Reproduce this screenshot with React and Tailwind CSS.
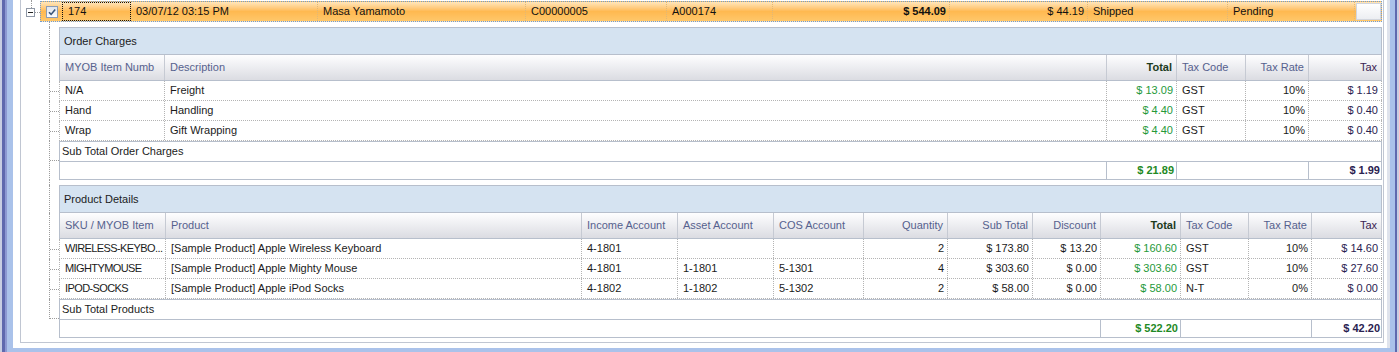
const FONT = "font-['Liberation_Sans',Arial,sans-serif]";

const orderCols = [
  { label: "MYOB Item Numb" },
  { label: "Description" },
  { label: "Total", right: true, kind: "total" },
  { label: "Tax Code" },
  { label: "Tax Rate", right: true },
  { label: "Tax", right: true, kind: "tax" },
];

const orderRows = [
  ["N/A", "Freight", "$ 13.09", "GST", "10%", "$ 1.19"],
  ["Hand", "Handling", "$ 4.40", "GST", "10%", "$ 0.40"],
  ["Wrap", "Gift Wrapping", "$ 4.40", "GST", "10%", "$ 0.40"],
];

const productCols = [
  { label: "SKU / MYOB Item", tight: true },
  { label: "Product" },
  { label: "Income Account" },
  { label: "Asset Account" },
  { label: "COS Account" },
  { label: "Quantity", right: true },
  { label: "Sub Total", right: true },
  { label: "Discount", right: true },
  { label: "Total", right: true, kind: "total" },
  { label: "Tax Code" },
  { label: "Tax Rate", right: true },
  { label: "Tax", right: true, kind: "tax" },
];

const productRows = [
  ["WIRELESS-KEYBO...", "[Sample Product] Apple Wireless Keyboard", "4-1801", "", "", "2", "$ 173.80", "$ 13.20", "$ 160.60", "GST", "10%", "$ 14.60"],
  ["MIGHTYMOUSE", "[Sample Product] Apple Mighty Mouse", "4-1801", "1-1801", "5-1301", "4", "$ 303.60", "$ 0.00", "$ 303.60", "GST", "10%", "$ 27.60"],
  ["IPOD-SOCKS", "[Sample Product] Apple iPod Socks", "4-1802", "1-1802", "5-1302", "2", "$ 58.00", "$ 0.00", "$ 58.00", "N-T", "0%", "$ 0.00"],
];

const ORDER_GRID = "grid grid-cols-[105px_942px_70px_69px_63px_73px]";
const PRODUCT_GRID = "grid grid-cols-[106px_416px_96px_96px_90px_84px_85px_68px_80px_68px_63px_70px]";

// tree line on the left of the detail rows
const Gutter = ({ mode = "line" }) => (
  <div className="w-[38px] shrink-0 pl-[28px] flex">
    {mode === "end" ? (
      <div className="flex-1 flex flex-col">
        <div className="h-[20px] border-l border-b border-dotted border-[#9c9c9c]" />
      </div>
    ) : (
      <div className="flex-1 flex items-center border-l border-dotted border-[#9c9c9c]">
        {mode === "conn" && <div className="w-full border-t border-dotted border-[#9c9c9c]" />}
      </div>
    )}
  </div>
);

const Band = ({ title }) => (
  <div className="flex h-[28px]">
    <Gutter />
    <div className="w-[1323px] border border-[#b7bfcc] bg-[#d5e3f1] flex items-center pl-[4px] text-[#1b1b1b]">
      {title}
    </div>
  </div>
);

const Header = ({ cols, grid }) => (
  <div className="flex h-[26px]">
    <Gutter />
    <div className={`${grid} w-[1323px] border-l border-b border-[#b7bfcc] bg-linear-to-b from-[#fefeff] to-[#dbdce2]`}>
      {cols.map((c, i) => (
        <div
          key={i}
          className={`border-r border-[#c6cad3] flex items-center pb-[1px] whitespace-nowrap ${
            c.right ? "justify-end pr-[4px]" : "pl-[5px]"
          } ${
            c.kind === "total"
              ? "font-bold text-[#1d3b1d]"
              : c.kind === "tax"
              ? "text-[#3a2453]"
              : "text-[#56618e]"
          }`}
        >
          {c.label}
        </div>
      ))}
    </div>
  </div>
);

const DataRow = ({ cols, grid, values }) => (
  <div className="flex h-[20px]">
    <Gutter mode="conn" />
    <div className={`${grid} w-[1323px] border-l border-b border-dotted border-[#b4b4b4]`}>
      {values.map((v, i) => (
        <div
          key={i}
          className={`border-r border-dotted border-[#b4b4b4] flex items-center overflow-hidden whitespace-nowrap ${
            cols[i].right ? "justify-end pr-[3px]" : "pl-[5px]"
          } ${cols[i].tight ? "tracking-[-0.6px]" : ""} ${
            cols[i].kind === "total"
              ? "text-[#26993a]"
              : cols[i].kind === "tax"
              ? "text-[#2a2250]"
              : "text-[#1b1b1b]"
          }`}
        >
          {v}
        </div>
      ))}
    </div>
  </div>
);

const SubTotal = ({ title, grid, leftSpan, total, tax, last }) => (
  <div className="flex h-[39px]">
    <Gutter mode={last ? "end" : "conn"} />
    <div className="w-[1323px] flex flex-col">
      <div className="h-[21px] border border-[#b7bfcc] flex items-center pl-[2px] text-[#1b1b1b]">
        {title}
      </div>
      <div className={`${grid} h-[18px] border-l border-r border-b border-[#b7bfcc] font-bold`}>
        <div className={`${leftSpan} border-r border-[#b7bfcc]`} />
        <div className="border-r border-[#b7bfcc] flex items-center justify-end pr-[2px] text-[#1f8a25]">
          {total}
        </div>
        <div className="col-span-2 border-r border-[#b7bfcc]" />
        <div className="flex items-center justify-end pr-[2px] text-[#2a2250]">{tax}</div>
      </div>
    </div>
  </div>
);

const Spacer = () => (
  <div className="flex h-[5px]">
    <Gutter />
  </div>
);

const mainCells = [
  { w: "w-[69px]", text: "174", focus: true },
  { w: "w-[187px]", text: "03/07/12 03:15 PM" },
  { w: "w-[208px]", text: "Masa Yamamoto" },
  { w: "w-[141px]", text: "C00000005" },
  { w: "w-[106px]", text: "A000174" },
  { w: "w-[177px]", text: "$ 544.09", right: true, bold: true },
  { w: "w-[138px]", text: "$ 44.19", right: true },
  { w: "w-[140px]", text: "Shipped" },
  { w: "w-[127px]", text: "Pending" },
];

const MainRow = () => (
  <div className="flex h-[22px]">
    {/* expand box */}
    <div className="w-[19px] shrink-0 flex flex-col">
      <div className="ml-[10px] h-[8px] border-l border-dotted border-[#9c9c9c]" />
      <div className="flex items-center ml-[5px]">
        <div className="w-[9px] h-[9px] border border-[#8f98a6] bg-white flex items-center justify-center">
          <div className="w-[5px] h-[1px] bg-[#222]" />
        </div>
        <div className="w-[5px] border-t border-dotted border-[#9c9c9c]" />
      </div>
    </div>
    <div className="mt-[1px] w-[1342px] h-[21px] border border-dotted border-[#6f9bd4] flex bg-linear-to-b from-[#ffe6bb] via-[#ffb950] to-[#ffc76a] text-[#111]">
      <div className="w-[21px] shrink-0 flex items-center justify-end pr-[4px]">
        <div className="w-[12px] h-[12px] border border-[#8b9cb6] bg-linear-to-b from-[#dfe5ee] to-[#fbfbfc] flex items-center justify-center">
          <svg width="10" height="10" viewBox="0 0 10 10">
            <path d="M2 5.2 L4.1 7.4 L8.2 2.4" fill="none" stroke="#3b5679" strokeWidth="1.6" />
          </svg>
        </div>
      </div>
      {mainCells.map((c, i) => (
        <div
          key={i}
          className={`${c.w} shrink-0 flex items-center ${
            c.focus ? "border border-dotted border-[#111] pl-[5px]" : "border-r border-dotted border-[#e0b878]"
          } ${c.right ? "justify-end pr-[3px]" : c.focus ? "" : "pl-[5px]"} ${c.bold ? "font-bold" : ""}`}
        >
          {c.text}
        </div>
      ))}
      <div className="w-[26px] shrink-0 flex items-center justify-center">
        <div className="w-[25px] h-[17px] border border-[#d2d6de] bg-linear-to-b from-[#ffffff] to-[#eceef2]" />
      </div>
    </div>
  </div>
);

export default function App() {
  return (
    <div className={`${FONT} text-[11px] leading-none flex w-[1399px] h-[352px] overflow-hidden bg-white`}>
      <div className="w-[2px] bg-[#c8cee2]" />
      <div className="w-[3px] bg-[#5f69ae]" />
      <div className="w-[2px] bg-[#8d99d2]" />
      <div className="w-[1388px] flex flex-col bg-[#aac2ea] pl-[6px] pr-[5px] pb-[4px]">
        <div className="flex-1 flex bg-white pl-[7px] pr-[3px] pb-[5px] border-r-[3px] border-[#dfe3ec]">
          <div className="flex-1 flex flex-col border-l border-r border-b border-[#c0c6d2] pr-[1px]">
            <MainRow />
            <Spacer />
            <Band title="Order Charges" />
            <Header cols={orderCols} grid={ORDER_GRID} />
            {orderRows.map((r, i) => (
              <DataRow key={i} cols={orderCols} grid={ORDER_GRID} values={r} />
            ))}
            <SubTotal
              title="Sub Total Order Charges"
              grid={ORDER_GRID}
              leftSpan="col-span-2"
              total="$ 21.89"
              tax="$ 1.99"
            />
            <Spacer />
            <Band title="Product Details" />
            <Header cols={productCols} grid={PRODUCT_GRID} />
            {productRows.map((r, i) => (
              <DataRow key={i} cols={productCols} grid={PRODUCT_GRID} values={r} />
            ))}
            <SubTotal
              title="Sub Total Products"
              grid={PRODUCT_GRID}
              leftSpan="col-span-8"
              total="$ 522.20"
              tax="$ 42.20"
              last
            />
          </div>
        </div>
      </div>
      <div className="w-[2px] bg-[#5f69ae]" />
      <div className="w-[2px] bg-[#c8cee2]" />
    </div>
  );
}
